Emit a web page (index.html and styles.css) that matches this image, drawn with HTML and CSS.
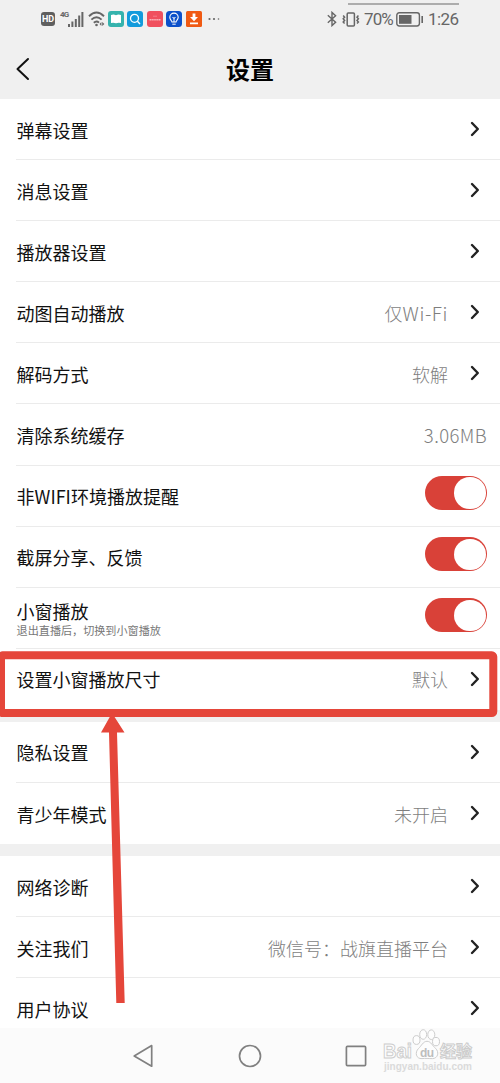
FILE: index.html
```html
<!DOCTYPE html>
<html lang="zh-CN">
<head>
    <meta charset="UTF-8">
    <meta name="viewport" content="width=device-width, initial-scale=1.0">
    <title>设置</title>
    <link rel="stylesheet" href="styles.css">
</head>
<body>
    <!-- shared icons -->
    <svg width="0" height="0" class="defs">
        <symbol id="arrow" viewBox="0 0 10 16">
            <path d="M2 2 L7.8 8 L2 14" fill="none" stroke="#222" stroke-width="2.4" stroke-linecap="round" stroke-linejoin="round"/>
        </symbol>
    </svg>
    <div class="phone">
        <div class="status">
            <div class="status-left">
                <span class="hd">HD</span>
                <span class="net">4G</span>
                <svg class="signal" width="16" height="15" viewBox="0 0 16 15" fill="#666">
                    <rect x="0" y="12" width="2" height="3"/>
                    <rect x="3.4" y="9.5" width="2" height="5.5"/>
                    <rect x="6.8" y="7" width="2" height="8"/>
                    <rect x="10.2" y="3.5" width="2" height="11.5"/>
                    <rect x="13.4" y="0" width="2" height="15"/>
                </svg>
                <svg class="wifi" width="18" height="16" viewBox="0 0 18 16" fill="none" stroke="#666" stroke-width="1.9">
                    <path d="M1 5.2 Q8.5 -2 16 5.2"/>
                    <path d="M3.4 8.6 Q8.5 3.8 13.6 8.6"/>
                    <path d="M5.8 11.8 Q8.5 9.3 11 11.6"/>
                    <circle cx="8.5" cy="14" r="1.3" fill="#666" stroke="none"/>
                    <path d="M11.5 13 L13.4 11 L13.4 15 Z M14.2 11 L16.4 13 L14.2 15 Z" fill="#666" stroke="none"/>
                </svg>
                <svg class="app" width="16" height="16" viewBox="0 0 16 16">
                    <rect width="16" height="16" rx="3" fill="#35b3ad"/>
                    <path d="M3 4 Q5.5 2.8 8 4.2 Q10.5 2.8 13 4 V12 Q10.5 11.3 8 12.2 Q5.5 11.3 3 12 Z" fill="#fff"/>
                </svg>
                <svg class="app" width="16" height="16" viewBox="0 0 16 16">
                    <rect width="16" height="16" rx="3" fill="#139bdc"/>
                    <circle cx="7.5" cy="7.3" r="4" fill="none" stroke="#fff" stroke-width="1.3"/>
                    <path d="M10.4 10.3 L13 13" stroke="#fff" stroke-width="1.4"/>
                </svg>
                <svg class="app" width="16" height="16" viewBox="0 0 16 16">
                    <rect width="16" height="16" rx="3" fill="#f0505e"/>
                    <path d="M2.5 8.8 H13.5" stroke="#f9b4bb" stroke-width="1.6" stroke-dasharray="1.5 .4"/>
                    <path d="M6 5.2 H10" stroke="#f47c88" stroke-width="1"/>
                </svg>
                <svg class="app" width="16" height="16" viewBox="0 0 16 16">
                    <rect width="16" height="16" rx="3.5" fill="#0c50ca"/>
                    <path d="M6 11 C6 9.5 3.8 8.8 3.8 6.3 A4.2 4.2 0 0 1 12.2 6.3 C12.2 8.8 10 9.5 10 11 Z" fill="none" stroke="#fff" stroke-width="1.1"/>
                    <path d="M6.3 13.2 H9.7 M8 11 V6.5 M6.5 6 L8 7.5 L9.5 6" fill="none" stroke="#fff" stroke-width="1"/>
                </svg>
                <svg class="app" width="16" height="16" viewBox="0 0 16 16">
                    <rect width="16" height="16" rx="1.5" fill="#f05a13"/>
                    <path d="M6.6 2.5 H9.4 V6 H12 L8 10.3 L4 6 H6.6 Z M4 11.6 H12 V13.3 H4 Z" fill="#fff"/>
                </svg>
                <svg class="more" width="12" height="4" viewBox="0 0 12 4" fill="#666">
                    <circle cx="1.5" cy="2" r="1.1"/>
                    <circle cx="6" cy="2" r="1.1"/>
                    <circle cx="10.5" cy="2" r=".8"/>
                </svg>
            </div>
            <div class="status-right">
                <svg class="bluetooth" width="10" height="16" viewBox="0 0 10 16" fill="none" stroke="#666" stroke-width="1.4">
                    <path d="M.8 4.3 L8.6 11.3 L5 14.6 V1.4 L8.6 4.7 L.8 11.7"/>
                </svg>
                <svg class="vibrate" width="18" height="15" viewBox="0 0 18 15" fill="none" stroke="#666" stroke-width="1.5">
                    <rect x="5.2" y="1" width="7.2" height="13" rx="1"/>
                    <path d="M1.2 3.5 L2.6 5.2 L1.2 6.8 L2.6 8.4 L1.2 10 L2.6 11.5 M16.4 3.5 L15 5.2 L16.4 6.8 L15 8.4 L16.4 10 L15 11.5"/>
                </svg>
                <span class="percent">70%</span>
                <svg class="battery" width="28" height="15" viewBox="0 0 28 15">
                    <rect x=".8" y=".8" width="22.6" height="13.2" rx="2.4" fill="none" stroke="#666" stroke-width="1.4"/>
                    <rect x="3" y="3" width="12.5" height="8.8" fill="#666"/>
                    <rect x="25.4" y="4" width="1.6" height="7" fill="#666"/>
                </svg>
                <span class="time">1:26</span>
            </div>
            <div class="pull-line"></div>
        </div>

        <header class="title-bar">
            <svg class="back" width="14" height="24" viewBox="0 0 14 24">
                <path d="M12 2 L1.5 12 L12 22" fill="none" stroke="#111" stroke-width="2" stroke-linecap="round" stroke-linejoin="round"/>
            </svg>
            <h1>设置</h1>
        </header>

        <div class="group">
            <div class="row"><span class="label">弹幕设置</span><svg class="arrow"><use href="#arrow"/></svg></div>
            <div class="row"><span class="label">消息设置</span><svg class="arrow"><use href="#arrow"/></svg></div>
            <div class="row"><span class="label">播放器设置</span><svg class="arrow"><use href="#arrow"/></svg></div>
            <div class="row"><span class="label">动图自动播放</span><span class="value">仅<span class="latin">Wi-Fi</span></span><svg class="arrow"><use href="#arrow"/></svg></div>
            <div class="row"><span class="label">解码方式</span><span class="value">软解</span><svg class="arrow"><use href="#arrow"/></svg></div>
            <div class="row"><span class="label">清除系统缓存</span><span class="value last"><span class="size">3.06MB</span></span></div>
            <div class="row"><span class="label">非WIFI环境播放提醒</span><span class="switch"></span></div>
            <div class="row"><span class="label">截屏分享、反馈</span><span class="switch"></span></div>
            <div class="row">
                <div class="label two">
                    <span>小窗播放</span>
                    <span class="sub">退出直播后，切换到小窗播放</span>
                </div>
                <span class="switch"></span>
            </div>
            <div class="row"><span class="label">设置小窗播放尺寸</span><span class="value">默认</span><svg class="arrow"><use href="#arrow"/></svg></div>
        </div>
        <div class="group">
            <div class="row"><span class="label">隐私设置</span><svg class="arrow"><use href="#arrow"/></svg></div>
            <div class="row"><span class="label">青少年模式</span><span class="value">未开启</span><svg class="arrow"><use href="#arrow"/></svg></div>
        </div>
        <div class="group">
            <div class="row"><span class="label">网络诊断</span><svg class="arrow"><use href="#arrow"/></svg></div>
            <div class="row"><span class="label">关注我们</span><span class="value">微信号：战旗直播平台</span><svg class="arrow"><use href="#arrow"/></svg></div>
            <div class="row"><span class="label">用户协议</span><svg class="arrow"><use href="#arrow"/></svg></div>
        </div>

        <nav class="nav-bar">
            <svg width="22" height="26" viewBox="0 0 22 26"><path d="M18.7 2.6 V23.2 L1.2 13 Z" fill="none" stroke="#808080" stroke-width="1.7" stroke-linejoin="round"/></svg>
            <svg width="24" height="24" viewBox="0 0 24 24"><circle cx="12" cy="12" r="10.5" fill="none" stroke="#808080" stroke-width="1.7"/></svg>
            <svg width="22" height="22" viewBox="0 0 22 22"><rect x="1.4" y="1.4" width="19.2" height="19.2" rx="1" fill="none" stroke="#808080" stroke-width="1.7"/></svg>
        </nav>

        <!-- red frame and pointer over the list -->
        <svg class="mark" width="500" height="1083" viewBox="0 0 500 1083">
            <rect x="1" y="655.3" width="492.3" height="57.8" rx="1.5" fill="none" stroke="#e5463a" stroke-width="8"/>
            <path d="M112 713 L124.5 732.5 H117 L124.7 1003 H116.3 L109 732.5 H101 Z" fill="#e5463a"/>
        </svg>

        <svg class="watermark" width="100" height="52" viewBox="0 0 100 52">
            <g fill="#fdfdfd" stroke="#cdcdcd" stroke-width="1">
                <text class="wm-name" x="3" y="30" textLength="29" lengthAdjust="spacingAndGlyphs">Bai</text>
                <text class="wm-cn" x="60" y="29" textLength="32">经验</text>
                <ellipse cx="36.5" cy="12" rx="3.5" ry="4.4"/>
                <ellipse cx="43.2" cy="6.5" rx="3.5" ry="4.8"/>
                <ellipse cx="51.3" cy="6.7" rx="3.5" ry="4.8"/>
                <ellipse cx="56" cy="13.6" rx="3.5" ry="4.2"/>
                <path d="M47 13.3 C51 13.3 52.5 18 55.5 20.3 C59.5 24 58 30.5 52.5 30.6 C49 30.6 45 30.2 42 30.6 C36 31 34.5 24.5 38.5 20.5 C41.5 18 43 13.3 47 13.3 Z"/>
            </g>
            <text class="wm-du" x="40" y="28.5" textLength="14">du</text>
            <text class="wm-url" x="4" y="41.5" textLength="88">jingyan.baidu.com</text>
        </svg>
    </div>
</body>
</html>
```
FILE: styles.css
```css
body {
    margin: 0;
    background-color: #fff;
    font-family: "Noto Sans CJK SC", sans-serif;
    color: #111;
}
.defs {
    position: absolute;
}
.phone {
    position: relative;
    width: 500px;
    height: 1083px;
    overflow: hidden;
    display: flex;
    flex-direction: column;
    background-color: #f0f0f0;
}

/* status bar */
.status {
    position: relative;
    height: 38px;
    flex: none;
    display: flex;
    justify-content: space-between;
    padding: 0 41px;
    color: #666;
    font-family: Roboto, sans-serif;
}
.status-left,
.status-right {
    display: flex;
    align-items: center;
}
.status-left svg,
.status-right svg {
    flex: none;
}
.hd {
    width: 14px;
    height: 14px;
    border-radius: 3px;
    background-color: #5f5f5f;
    color: #fff;
    font-size: 9px;
    font-weight: bold;
    line-height: 15px;
    text-align: center;
}
.net {
    width: 8px;
    margin: 0 0 8px 5px;
    font-size: 8px;
    font-weight: bold;
    line-height: 8px;
    letter-spacing: -0.8px;
}
.wifi {
    margin: 0 2px 0 4px;
}
.app {
    margin-right: 3.4px;
}
.more {
    margin-left: 3px;
}
.percent {
    width: 31px;
    margin: 0 1px 0 4px;
    font-size: 17px;
    line-height: 20px;
    letter-spacing: -0.9px;
}
.vibrate {
    margin-left: 5px;
}
.time {
    width: 31px;
    margin: 0 0 0 4px;
    font-size: 17px;
    letter-spacing: -0.6px;
}
.pull-line {
    position: absolute;
    left: 348px;
    top: 3px;
    width: 111px;
    height: 2px;
    background-color: #adadad;
}

/* page title */
.title-bar {
    height: 61px;
    flex: none;
    display: grid;
    grid-template-columns: 40px 1fr 40px;
    align-items: center;
}
.title-bar h1 {
    margin: 0;
    font-size: 24px;
    line-height: 36px;
    text-align: center;
    color: #000;
}
.back {
    margin-left: 16px;
}

/* settings list */
.group {
    flex: none;
    margin-bottom: 12px;
    background-color: #fff;
}
.row {
    display: flex;
    align-items: center;
    box-sizing: border-box;
    height: 61.1px;
    margin-left: 16px;
    padding-right: 13px;
    border-bottom: 1px solid #ebebeb;
}
.row:last-child {
    border-bottom-color: transparent;
}
.label {
    flex: 1;
    padding: 1px 0 0 0.6px;
    font-size: 18px;
    line-height: 26px;
}
.two {
    display: flex;
    flex-direction: column;
    padding-top: 0;
    line-height: 24px;
}
.sub {
    color: #777;
    font-size: 11.1px;
    line-height: 14px;
}
.value {
    margin-right: 22px;
    padding-top: 1px;
    color: #7e7e7e;
    font-size: 18px;
    line-height: 26px;
    font-weight: 300;
}
.last {
    margin-right: 0;
}
.latin {
    font-size: 19px;
    letter-spacing: 0.6px;
}
.size {
    font-size: 18.5px;
    letter-spacing: 0.4px;
}
.arrow {
    width: 10px;
    height: 16px;
    margin-right: 7px;
}
.switch {
    width: 62px;
    height: 34px;
    margin-bottom: 5px;
    box-sizing: border-box;
    padding: 1.3px;
    border-radius: 17px;
    background-color: #d94138;
    display: flex;
    justify-content: flex-end;
}
.switch::after {
    content: "";
    width: 31.4px;
    height: 31.4px;
    border-radius: 50%;
    background-color: #fff;
}

/* system navigation */
.nav-bar {
    position: absolute;
    left: 0;
    right: 0;
    bottom: 0;
    height: 55px;
    box-sizing: border-box;
    padding: 0 133px;
    display: flex;
    align-items: center;
    justify-content: space-between;
    background-color: #fbfbfb;
}

.mark {
    position: absolute;
    left: 0;
    top: 0;
}
.watermark {
    position: absolute;
    left: 380px;
    top: 1028px;
}
.wm-name {
    font: bold 20px "Liberation Sans", sans-serif;
}
.wm-cn {
    font: bold 16px "Noto Sans CJK SC", sans-serif;
}
.wm-du {
    font: bold 12px "Liberation Sans", sans-serif;
    fill: #bdbdbd;
}
.wm-url {
    font: bold 10px "Liberation Sans", sans-serif;
    fill: #dadada;
}
```
